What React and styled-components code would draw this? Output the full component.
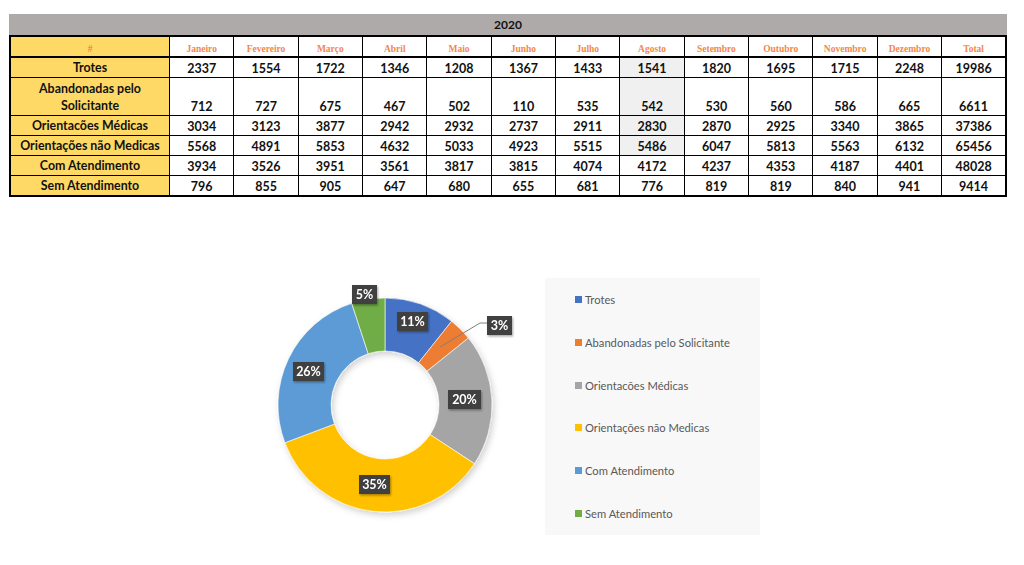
import React from 'react';
import styled, { createGlobalStyle } from 'styled-components';

const GlobalStyle = createGlobalStyle`
  html, body {
    margin: 0;
    padding: 0;
    background: #fff;
  }
  body {
    font-family: Lato, "Liberation Sans", sans-serif;
  }
`;

const months = ['Janeiro', 'Fevereiro', 'Março', 'Abril', 'Maio', 'Junho', 'Julho', 'Agosto', 'Setembro', 'Outubro', 'Novembro', 'Dezembro', 'Total'];

const rows = [
  { label: 'Trotes', values: [2337, 1554, 1722, 1346, 1208, 1367, 1433, 1541, 1820, 1695, 1715, 2248, 19986], color: '#4472c4', shade: true },
  { label: 'Abandonadas pelo Solicitante', values: [712, 727, 675, 467, 502, 110, 535, 542, 530, 560, 586, 665, 6611], color: '#ed7d31', shade: true, tall: true },
  { label: 'Orientacões Médicas', values: [3034, 3123, 3877, 2942, 2932, 2737, 2911, 2830, 2870, 2925, 3340, 3865, 37386], color: '#a5a5a5', shade: true },
  { label: 'Orientações não Medicas', values: [5568, 4891, 5853, 4632, 5033, 4923, 5515, 5486, 6047, 5813, 5563, 6132, 65456], color: '#ffc000', shade: true },
  { label: 'Com Atendimento', values: [3934, 3526, 3951, 3561, 3817, 3815, 4074, 4172, 4237, 4353, 4187, 4401, 48028], color: '#5b9bd5' },
  { label: 'Sem Atendimento', values: [796, 855, 905, 647, 680, 655, 681, 776, 819, 819, 840, 941, 9414], color: '#70ad47' },
];

// label boxes for the donut, in svg coordinates
const chartLabels = [
  { text: '11%', x: 127, y: 34, w: 31 },
  { text: '3%', x: 217, y: 38, w: 25 },
  { text: '20%', x: 178, y: 112, w: 33 },
  { text: '35%', x: 89, y: 197, w: 31 },
  { text: '26%', x: 23, y: 84, w: 31 },
  { text: '5%', x: 82, y: 7, w: 25 },
];

const Page = styled.div`
  padding: 14px 0 0 9px;
  width: 998px;
`;

const TitleBar = styled.div`
  height: 21px;
  background: #aeaaaa;
  display: flex;
  align-items: center;
  justify-content: center;
  font-weight: 700;
  font-size: 12px;
  color: #111;
`;

const Grid = styled.table`
  width: 998px;
  border-collapse: collapse;
  border: 2px solid #000;
  table-layout: fixed;
`;

const LabelHead = styled.th`
  width: 158px;
  background: #ffd966;
  border: 1px solid #000;
  border-bottom-width: 2px;
  height: 17px;
  padding: 0 0 2px;
  vertical-align: bottom;
  font-family: "Liberation Serif", serif;
  font-size: 9.5px;
  font-weight: 700;
  color: #f4874b;
`;

const MonthHead = styled.th`
  border: 1px solid #000;
  border-bottom-width: 2px;
  padding: 0 0 2px;
  vertical-align: bottom;
  font-family: "Liberation Serif", serif;
  font-size: 9.5px;
  font-weight: 700;
  color: #f4874b;
  background: #fff;
`;

const RowLabel = styled.td`
  background: #ffd966;
  border: 1px solid #000;
  height: ${p => (p.tall ? '37px' : '19px')};
  padding: 0;
  text-align: center;
  vertical-align: middle;
  font-size: 12.4px;
  font-weight: 700;
  line-height: 17px;
  color: #111;
`;

const Cell = styled.td`
  border: 1px solid #000;
  background: ${p => (p.shade ? '#f0f0f0' : '#fff')};
  padding: 0 0 1px;
  text-align: center;
  vertical-align: bottom;
  font-size: 12.5px;
  font-weight: 700;
  color: #111;
`;

const ChartRow = styled.div`
  display: flex;
  align-items: flex-start;
  gap: 15px;
  margin-top: 81px;
  padding-left: 270px;
`;

const Donut = styled.svg`
  display: block;
  flex: none;
`;

const Legend = styled.div`
  width: 215px;
  height: 257px;
  background: #f8f8f8;
  display: flex;
  flex-direction: column;
  justify-content: space-around;
  padding-left: 30px;
  box-sizing: border-box;
`;

const LegendItem = styled.div`
  display: flex;
  align-items: center;
  gap: 3px;
  font-size: 11.2px;
  color: #595959;
`;

const Swatch = styled.span`
  width: 7px;
  height: 7px;
  background: ${p => p.color};
`;

const cx = 115;
const cy = 127;
const R = 107;
const r = 54;

function arcPath(a0, a1) {
  const p = (rad, a) => [cx + rad * Math.sin(a), cy - rad * Math.cos(a)];
  const large = a1 - a0 > Math.PI ? 1 : 0;
  const [x0, y0] = p(R, a0);
  const [x1, y1] = p(R, a1);
  const [x2, y2] = p(r, a1);
  const [x3, y3] = p(r, a0);
  return `M${x0} ${y0} A${R} ${R} 0 ${large} 1 ${x1} ${y1} L${x2} ${y2} A${r} ${r} 0 ${large} 0 ${x3} ${y3} Z`;
}

function DonutChart() {
  const totals = rows.map(row => row.values[12]);
  const sum = totals.reduce((a, b) => a + b, 0);
  let angle = 0;
  const slices = rows.map((row, i) => {
    const a0 = angle;
    angle += (totals[i] / sum) * Math.PI * 2;
    return { d: arcPath(a0, angle), color: row.color };
  });

  return (
    <Donut width="260" height="255" viewBox="0 0 260 255">
      <defs>
        <filter id="soft" x="-20%" y="-20%" width="140%" height="140%">
          <feDropShadow dx="2" dy="3" stdDeviation="3" floodColor="#000" floodOpacity="0.18" />
        </filter>
        <filter id="boxShadow" x="-30%" y="-30%" width="160%" height="160%">
          <feDropShadow dx="1" dy="1.5" stdDeviation="1.2" floodColor="#000" floodOpacity="0.35" />
        </filter>
      </defs>
      <g filter="url(#soft)">
        {slices.map((s, i) => (
          <path key={i} d={s.d} fill={s.color} stroke="#fff" strokeWidth="0.6" />
        ))}
      </g>
      <polyline points="217,45 210,45 170,69" fill="none" stroke="#7f7f7f" strokeWidth="1" />
      {chartLabels.map(l => (
        <g key={l.text} filter="url(#boxShadow)">
          <rect x={l.x} y={l.y} width={l.w} height="19" fill="#404040" />
          <text
            x={l.x + l.w / 2}
            y={l.y + 14}
            textAnchor="middle"
            fill="#fff"
            fontFamily="Lato, 'Liberation Sans', sans-serif"
            fontWeight="700"
            fontSize="12.5"
          >
            {l.text}
          </text>
        </g>
      ))}
    </Donut>
  );
}

export default function App() {
  return (
    <>
      <GlobalStyle />
      <Page>
        <TitleBar>2020</TitleBar>
        <Grid>
          <thead>
            <tr>
              <LabelHead>#</LabelHead>
              {months.map(m => (
                <MonthHead key={m}>{m}</MonthHead>
              ))}
            </tr>
          </thead>
          <tbody>
            {rows.map(row => (
              <tr key={row.label}>
                <RowLabel tall={row.tall}>
                  {row.tall ? (<>Abandonadas pelo<br />Solicitante</>) : row.label}
                </RowLabel>
                {row.values.map((v, i) => (
                  <Cell key={i} shade={row.shade && i === 7}>{v}</Cell>
                ))}
              </tr>
            ))}
          </tbody>
        </Grid>
      </Page>
      <ChartRow>
        <DonutChart />
        <Legend>
          {rows.map(row => (
            <LegendItem key={row.label}>
              <Swatch color={row.color} />
              {row.label}
            </LegendItem>
          ))}
        </Legend>
      </ChartRow>
    </>
  );
}
